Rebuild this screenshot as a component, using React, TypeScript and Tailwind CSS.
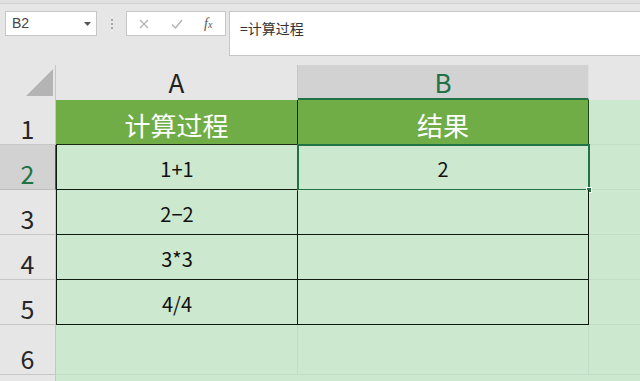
import React from "react";

const CJK = { fontFamily: '"Noto Sans CJK SC", "Noto Sans", sans-serif' };

function RowHeader({ n, h, selected }: { n: number; h: string; selected?: boolean }) {
  return (
    <div
      className={
        "w-[56px] shrink-0 flex items-end justify-center border-b border-r leading-none text-[25px] " +
        h +
        (selected
          ? " bg-[#d2d2d2] text-[#217346] border-b-[#bdbdbd] border-r-[#217346]"
          : " bg-[#e6e6e6] text-[#262626] border-b-[#c6c6c6] border-r-[#c6c6c6]")
      }
      style={CJK}
    >
      <span className="pb-[3px]">{n}</span>
    </div>
  );
}

export default function App() {
  const dataRows = [
    { n: 2, a: "1+1", b: "2" },
    { n: 3, a: "2\u22122", b: "" },
    { n: 4, a: "3*3", b: "" },
    { n: 5, a: "4/4", b: "" },
  ];
  return (
    <div className="w-[640px] h-[381px] overflow-hidden bg-[#e6e6e6] flex flex-col" style={CJK}>
      {/* toolbar */}
      <div className="h-[65px] shrink-0 flex flex-col">
        <div className="h-[4px] bg-[#e1e1e1] border-b border-[#d2d2d2]" />
        <div className="flex items-start pt-[7px]">
          <div className="ml-[5px] w-[92px] h-[25px] bg-white border border-[#c6c6c6] flex items-center justify-between pl-[6px] pr-[5px]">
            <span className="text-[14px] text-[#444]" style={{ fontFamily: '"Liberation Sans", Arial, sans-serif' }}>B2</span>
            <svg width="7" height="4" viewBox="0 0 7 4"><path d="M0 0h7L3.5 4z" fill="#555" /></svg>
          </div>
          <div className="w-[29px] h-[25px] flex flex-col items-center justify-center gap-[2px]">
            <div className="w-[2px] h-[2px] bg-[#a8a8a8]" />
            <div className="w-[2px] h-[2px] bg-[#a8a8a8]" />
            <div className="w-[2px] h-[2px] bg-[#a8a8a8]" />
          </div>
          <div className="w-[100px] h-[25px] bg-white border border-[#c6c6c6] flex items-center">
            <svg className="ml-[12px]" width="10" height="10" viewBox="0 0 10 10">
              <path d="M1 1L9 9M9 1L1 9" stroke="#b3b3b3" strokeWidth="1.3" fill="none" />
            </svg>
            <svg className="ml-[22px]" width="12" height="10" viewBox="0 0 12 10">
              <path d="M1 5.5L4.5 9L11 1" stroke="#b3b3b3" strokeWidth="1.4" fill="none" />
            </svg>
            <span
              className="ml-[21px] text-[14px] italic text-[#555] leading-none"
              style={{ fontFamily: '"Liberation Serif", "Times New Roman", serif' }}
            >
              f<span className="text-[10px]">x</span>
            </span>
          </div>
          <div className="ml-[3px] flex-1 h-[45px] bg-white border border-r-0 border-[#c6c6c6] pl-[10px] pt-[3px]">
            <span className="text-[14px] text-[#333]">=计算过程</span>
          </div>
        </div>
      </div>

      {/* column headers */}
      <div className="h-[35px] shrink-0 flex">
        <div className="w-[56px] shrink-0 border-r border-[#c6c6c6] relative">
          <svg className="absolute left-[26px] top-[4px]" width="28" height="28" viewBox="0 0 28 28">
            <path d="M27 0V27H0z" fill="#b4b4b4" />
          </svg>
        </div>
        <div className="w-[242px] shrink-0 border-r border-[#c6c6c6] flex items-end justify-center text-[26px] leading-none text-[#222] pb-[5px]">
          A
        </div>
        <div className="w-[291px] shrink-0 bg-[#d2d2d2] border-b-2 border-r border-b-[#217346] border-r-[#e0e0e0] flex items-end justify-center text-[26px] leading-none text-[#217346] pb-[3px]">
          B
        </div>
        <div className="flex-1" />
      </div>

      {/* row 1 */}
      <div className="h-[45px] shrink-0 flex">
        <RowHeader n={1} h="h-[45px]" />
        <div className="w-[242px] shrink-0 bg-[#70ad47] border-r border-b border-[#1a2a12] flex items-end justify-center text-[26px] leading-none text-white pb-[6px]">
          计算过程
        </div>
        <div className="w-[291px] shrink-0 bg-[#70ad47] border-r border-b border-[#1e4a22] flex items-end justify-center text-[26px] leading-none text-white pb-[6px]">
          结果
        </div>
        <div className="flex-1 bg-[#cce8cf] border-b border-[#c3dcc6]" />
      </div>

      {dataRows.map((r) => (
        <div key={r.n} className="h-[45px] shrink-0 flex">
          <RowHeader n={r.n} h="h-[45px]" selected={r.n === 2} />
          <div className="w-[242px] shrink-0 bg-[#cce8cf] border-l border-r border-b border-[#0d1a0d] flex items-end justify-center text-[20px] leading-none text-[#111] pb-[10px]">
            {r.a}
          </div>
          <div className="w-[291px] shrink-0 bg-[#cce8cf] border-r border-b border-[#0d1a0d] flex items-end justify-center text-[20px] leading-none text-[#111] pb-[10px] relative">
            {r.b}
            {r.n === 2 && (
              <div className="absolute left-[-1px] top-[-1px] right-[-2px] bottom-[-2px] border-2 border-[#217346]">
                <div className="absolute right-[-4px] bottom-[-4px] w-[6px] h-[6px] bg-[#217346] border border-white" />
              </div>
            )}
          </div>
          <div className="flex-1 bg-[#cce8cf] border-b border-[#c3dcc6]" />
        </div>
      ))}

      {/* row 6 */}
      <div className="h-[50px] shrink-0 flex">
        <RowHeader n={6} h="h-[50px]" />
        <div className="w-[242px] shrink-0 bg-[#cce8cf] border-r border-b border-[#c3dcc6]" />
        <div className="w-[291px] shrink-0 bg-[#cce8cf] border-r border-b border-[#c3dcc6]" />
        <div className="flex-1 bg-[#cce8cf] border-b border-[#c3dcc6]" />
      </div>

      {/* row 7 partial */}
      <div className="flex-1 flex">
        <div className="w-[56px] shrink-0 bg-[#e6e6e6] border-r border-[#c6c6c6]" />
        <div className="flex-1 bg-[#cce8cf]" />
      </div>
    </div>
  );
}
